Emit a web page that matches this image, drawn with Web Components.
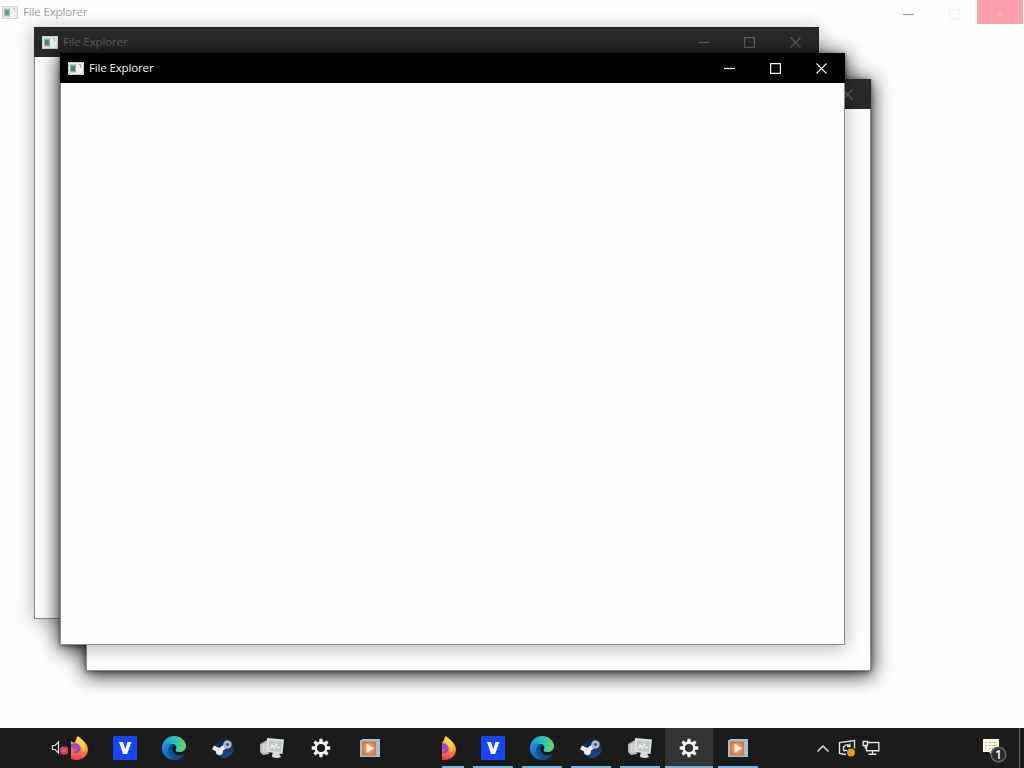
<!DOCTYPE html>
<html lang="en">
<head>
<meta charset="utf-8">
<title>Desktop</title>
<style>
  html, body {
    margin: 0;
    height: 100%;
    overflow: hidden;
    font-family: "Open Sans", "Noto Sans", sans-serif;
  }
</style>
</head>
<body>
<desk-top>
  <file-window class="full" state="maximized" label="File Explorer"></file-window>
  <file-window style="left:34px;top:27px" state="inactive" label="File Explorer"></file-window>
  <window-shadow style="left:60px;top:53px"></window-shadow>
  <window-shadow style="left:86px;top:79px"></window-shadow>
  <file-window style="left:86px;top:79px" state="inactive"></file-window>
  <file-window style="left:60px;top:53px" state="active" label="File Explorer"></file-window>
  <task-bar slot="bar"></task-bar>
</desk-top>

<script>
const ICONS = {
  app: `<svg width="16" height="13" viewBox="0 0 16 13">
    <rect x=".5" y=".5" width="15" height="12" fill="#e4eaea" stroke="#c4cccc"/>
    <path d="M2 2.500h6v8H2z" fill="#8fb3aa"/><path d="M3 4h4v5H3z" fill="#4f8177"/>
    <path d="M9 3h5v8H9z" fill="#f5eff2"/><path d="M11 2.500h1.500v3" fill="none" stroke="#a5a5ab"/></svg>`,
  volume: `<svg width="20" height="16" viewBox="0 0 20 16">
    <path d="M1.500 5.500H4L7.500 2v11L4 9.500H1.500z" fill="none" stroke="#ddd" stroke-width="1.200"/>
    <rect x="9" y="6.500" width="8" height="8" rx="2.500" fill="#e5384b"/><path d="M11.500 9l3 3m0-3l-3 3" stroke="#ff98a2"/></svg>`,
  firefox: `<svg width="24" height="24" viewBox="0 0 24 24">
    <defs><linearGradient id="a" x1=".8" y1="0" x2=".5" y2="1"><stop stop-color="#ffe64a"/><stop offset=".5" stop-color="#ff9b2b"/><stop offset="1" stop-color="#f0305c"/></linearGradient></defs>
    <path d="M14 0c2 2 4.500 3.500 6.500 6 2.500 2.500 3.700 5.500 3.300 9C23 20.500 18.500 24 12.500 24 5 24 0 18 1 11c1-4 4-6 6-6l3 2 2-3c0-2 1-3 2-4z" fill="url(#a)"/>
    <path d="M14 1c2 2 4 4 5.500 6.500 2 3.500 1.500 6.500-.5 9 0-5-2-7.500-5-9.500-1.500-2-1-4 0-6z" fill="#ffdb45"/>
    <path d="M5 8.500l7-1.500c4 2 5.500 5 4 8-2 4-9 4-11 0z" fill="#9a45d8"/>
    <path d="M4 11c4-1 5 2 9 2-1 2-3 2-4 4 2 1 5 0 7-1-1 4-5 5-8 4-4-1-5-5-4-9z" fill="#f56a3c"/></svg>`,
  v: `<svg width="24" height="24" viewBox="0 0 24 24"><rect width="24" height="24" rx="1" fill="#1547f6"/>
    <path d="M6 6h4l2.200 7.500L14.500 6h4l-4.400 12h-4z" fill="#fff"/></svg>`,
  edge: `<svg width="24" height="24" viewBox="0 0 24 24">
    <defs><linearGradient id="b" x1="0" y1=".4" x2="1" y2=".4"><stop stop-color="#1b9ad8"/><stop offset=".55" stop-color="#2cc4bd"/><stop offset="1" stop-color="#68d657"/></linearGradient>
    <linearGradient id="c" x1="0" y1="0" x2=".5" y2="1"><stop stop-color="#1d94dd"/><stop offset="1" stop-color="#0c5eb4"/></linearGradient></defs>
    <path d="M0 11C1 4 6 0 12 0c7 0 12 5 12 10 0 4-3 6-7 6-3 0-4-1-3-3 1-3-1-5-4-5-5 0-10 3-10 3z" fill="url(#b)"/>
    <path d="M0 11c2-4 7-5 10-3-3 1-4 7 0 10 4 4 9 3 12 .5C20 22 16 24 12 24 5 24-1 18 0 11z" fill="url(#c)"/>
    <path d="M10 8c-5 2-6 11 3 15.900 4 0 7-2 9-5.400-4 2-9 1-11-3-1-2-1-4 1-6z" fill="#124f91"/></svg>`,
  steam: `<svg width="24" height="24" viewBox="0 0 24 24">
    <defs><linearGradient id="d" x1="0" y1="0" x2="0" y2="1"><stop stop-color="#101b38"/><stop offset="1" stop-color="#164f91"/></linearGradient></defs>
    <circle cx="13" cy="12" r="10" fill="url(#d)"/>
    <path d="M2 11.500l6.500 3 6-4.500" fill="none" stroke="#e6ecf2" stroke-width="4.200"/>
    <circle cx="8.500" cy="15.500" r="3.500" fill="#e6ecf2"/>
    <circle cx="16.500" cy="8.500" r="4.300" fill="#9fadc1"/><circle cx="16.500" cy="8.500" r="2.200" fill="#42536f" stroke="#d3dce8"/></svg>`,
  monitor: `<svg width="26" height="24" viewBox="0 0 26 24">
    <path d="M1 8l7-4 2 14-6 1-3-3z" fill="#b4bbb9"/><path d="M3 9l5-3v10l-5 1z" fill="#cdd3d1"/>
    <path d="M8 2l17 1.500L23.500 18 8 16z" fill="#dce1df"/><path d="M10 4.500l13 1-1 10.500-12-1.500z" fill="#bdc7c4"/>
    <path d="M11 13l2-4 2 3 2-4 2 4 2-1" fill="none" stroke="#f5faf7" stroke-width="1.200"/>
    <path d="M14 16.500h6l1 3c2 1 0 2.500-3 2.500s-6-1-5-2.500z" fill="#d7dad9"/></svg>`,
  gear: `<svg width="20" height="20" viewBox="-10 -10 20 20">
    <g fill="#f7f7f7"><path id="t" d="M-1.400-9.300h2.800L2-5.500h-4z"/><use href="#t" transform="rotate(45)"/><use href="#t" transform="rotate(90)"/><use href="#t" transform="rotate(135)"/><use href="#t" transform="rotate(180)"/><use href="#t" transform="rotate(225)"/><use href="#t" transform="rotate(270)"/><use href="#t" transform="rotate(315)"/></g>
    <circle r="5.300" fill="none" stroke="#f7f7f7" stroke-width="2.400"/></svg>`,
  player: `<svg width="22" height="20" viewBox="0 0 22 20">
    <path d="M3 1h18v18H3z" fill="#9cc3d6"/><path d="M1 2h17v17H1z" fill="#a6bcc6"/>
    <rect x="3" y="3.500" width="14" height="14" rx="1" fill="#d07a4b"/><circle cx="10" cy="10.500" r="6" fill="#e8905a"/>
    <path d="M7.500 5.500l7.500 4.800-7.500 4.800z" fill="#fff3e4"/></svg>`,
  chevron: `<svg width="14" height="9" viewBox="0 0 14 9"><path d="M1.500 7.500L7 2l5.500 5.500" fill="none" stroke="#ddd" stroke-width="1.500"/></svg>`,
  update: `<svg width="18" height="18" viewBox="0 0 18 18">
    <path d="M8 15.500l-6.500-1V3.500l15-2v8" fill="none" stroke="#e3e3e3" stroke-width="1.400"/>
    <path d="M9 11.500H5.500V7M6 8c1-2.500 4-3 5.500-1M12 4.500v3H9" fill="none" stroke="#e3e3e3" stroke-width="1.300"/>
    <circle cx="13" cy="13.500" r="3.900" fill="#f09a18"/></svg>`,
  network: `<svg width="18" height="16" viewBox="0 0 18 16" fill="none" stroke="#e0e0e0" stroke-width="1.400">
    <path d="M6 2.500h10.800v8.300H4.500V6M10.500 11v3M6.500 14.200h8"/><path d="M1.200 1.500h4.300v4H1.200zM3.300 5.500v3"/></svg>`,
  notes: `<svg width="26" height="26" viewBox="0 0 26 26">
    <path d="M1 1h16v13h-6v4l-4-4H1z" fill="#fffbe0"/><path d="M3 4.500h2m2 0h8M3 7.500h2m2 0h8M3 10.500h2m2 0h6" stroke="#c9c39c"/>
    <circle cx="16.500" cy="16.500" r="7.300" fill="#2a2a2a" stroke="#656565" stroke-width="1.600"/>
    <text x="16.500" y="21" text-anchor="middle" font-size="12" font-weight="600" fill="#fff">1</text></svg>`
};

class DeskTop extends HTMLElement {
  constructor() {
    super();
    this.attachShadow({ mode: 'open' }).innerHTML = `
      <style>
        :host { display: grid; grid-template-rows: minmax(0, 1fr) 40px; height: 100vh; background: #fdfdfd; }
        main { position: relative; min-height: 0; }
      </style>
      <main><slot></slot></main>
      <slot name="bar"></slot>
    `;
  }
}

class WindowShadow extends HTMLElement {
  constructor() {
    super();
    this.attachShadow({ mode: 'open' }).innerHTML = `
      <style>
        :host {
          position: absolute;
          width: 785px;
          height: 592px;
          box-shadow: 0 1px 4px rgba(0, 0, 0, .5), 0 3px 19px 1px rgba(0, 0, 0, .68);
        }
      </style>
    `;
  }
}

class FileWindow extends HTMLElement {
  constructor() {
    super();
    this.attachShadow({ mode: 'open' });
    this.render();
  }

  render() {
    const label = this.getAttribute('label');
    this.shadowRoot.innerHTML = `
      <style>
        :host {
          --ink: #636363;
          position: absolute;
          box-sizing: border-box;
          display: flex;
          flex-direction: column;
          width: 785px;
          height: 592px;
          background: #fefefe;
          border: 1px solid #8b8b8b;
          border-top: 0;
          box-shadow: 0 3px 18px rgba(0, 0, 0, .3);
        }
        header {
          display: flex;
          align-items: center;
          height: 30px;
          flex: none;
          margin: 0 -1px;
          padding: 0 1px 0 8px;
          box-sizing: border-box;
          background: #292929;
          color: var(--ink);
        }
        .title { margin-left: 5px; font-size: 11.5px; line-height: 16px; white-space: nowrap; flex: 1; letter-spacing: -.14px; }
        .buttons { display: flex; }
        .buttons span { width: 46px; height: 30px; display: grid; place-items: center; }
        .buttons svg { fill: none; stroke: var(--ink); stroke-width: 1.2; }
        svg { display: block; }
        :host([state="active"]) { --ink: #f5f5f5; }
        :host([state="active"]) header { background: #000; }
        :host(.full) { inset: 0; width: auto; height: auto; border: 0; box-shadow: none; background: none; --ink: #a0a0a0; }
        :host(.full) header { height: 24px; margin: 0; padding-left: 2px; background: none; }
        :host(.full) .icon { opacity: .8; }
        :host(.full) .buttons span { height: 24px; }
        :host(.full) .buttons svg { margin-top: 5px; }
        :host(.full) .max svg { opacity: .1; }
        :host(.full) .close { background: #fd9faa; --ink: #ffc5cc; }
        :host(.full) .close svg { width: 6px; }
      </style>
      <header>
        ${label ? `<div class="icon">${ICONS.app}</div>` : ''}
        <div class="title">${label || ''}</div>
        <div class="buttons">
          <span><svg width="11" height="11"><path d="M0 5.500h11"/></svg></span>
          <span class="max"><svg width="11" height="11"><path d="M.6.600h9.800v9.800H.6z"/></svg></span>
          <span class="close"><svg width="11" height="11" viewBox="0 0 11 11"><path d="M.5.500l10 10m0-10l-10 10"/></svg></span>
        </div>
      </header>
    `;
  }
}

class TaskIcon extends HTMLElement {
  constructor() {
    super();
    this.attachShadow({ mode: 'open' }).innerHTML = `
      <style>
        :host { display: grid; place-items: center; width: 49px; height: 40px; flex: none; box-sizing: border-box; }
        svg { display: block; }
        :host([running]) {
          background: linear-gradient(#76b5e3, #76b5e3) center bottom / 40px 2px no-repeat;
        }
        :host([active]) {
          background:
            linear-gradient(#76b5e3, #76b5e3) right bottom / 48px 2px no-repeat,
            linear-gradient(#333, #333) right top / 48px 100% no-repeat;
        }
      </style>
      ${ICONS[this.getAttribute('name')]}
    `;
  }
}

class TaskBar extends HTMLElement {
  constructor() {
    super();
    this.attachShadow({ mode: 'open' }).innerHTML = `
      <style>
        :host { display: flex; height: 40px; background: #1b1b1b; box-sizing: border-box; }
        div { display: flex; }
        .launch { width: 394px; padding-left: 51px; box-sizing: border-box; }
        .launch > task-icon:first-child { width: 20px; }
        .clip { overflow: hidden; justify-content: flex-end; }
        .launch .clip { width: 30px; margin-right: 0; }
        .running { width: 321px; margin-left: 48px; }
        .running .clip { width: 26px; }
        .tray { margin-left: 48px; }
        .tray task-icon { width: 24px; }
        .notes { margin-left: auto; }
        .notes task-icon { width: 26px; margin-right: 11px; padding-top: 5px; }
        .peek { width: 4px; border-left: 1px solid #626262; }
      </style>
      <div class="launch">
        <task-icon name="volume"></task-icon>
        <div class="clip" style="width:32px"><task-icon name="firefox"></task-icon></div>
        <task-icon name="v"></task-icon>
        <task-icon name="edge"></task-icon>
        <task-icon name="steam"></task-icon>
        <task-icon name="monitor"></task-icon>
        <task-icon name="gear"></task-icon>
        <task-icon name="player"></task-icon>
      </div>
      <div class="running">
        <div class="clip"><task-icon name="firefox" running></task-icon></div>
        <task-icon name="v" running></task-icon>
        <task-icon name="edge" running></task-icon>
        <task-icon name="steam" running></task-icon>
        <task-icon name="monitor" running></task-icon>
        <task-icon name="gear" running active></task-icon>
        <task-icon name="player" running></task-icon>
      </div>
      <div class="tray">
        <task-icon name="chevron"></task-icon>
        <task-icon name="update"></task-icon>
        <task-icon name="network"></task-icon>
      </div>
      <div class="notes"><task-icon name="notes"></task-icon></div>
      <div class="peek"></div>
    `;
  }
}

customElements.define('window-shadow', WindowShadow);
customElements.define('file-window', FileWindow);
customElements.define('task-icon', TaskIcon);
customElements.define('task-bar', TaskBar);
customElements.define('desk-top', DeskTop);
</script>
</body>
</html>
